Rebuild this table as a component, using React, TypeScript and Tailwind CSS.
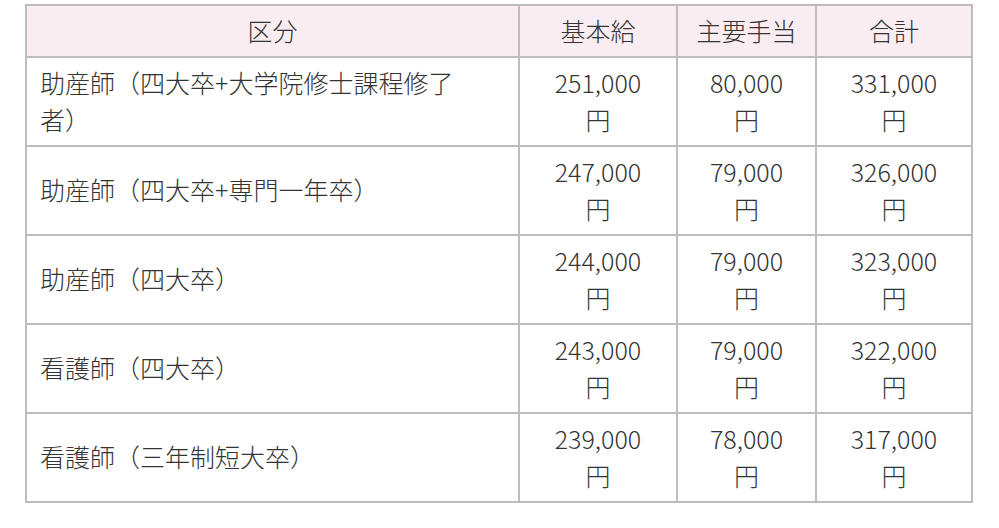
import React from 'react';

type Row = {
  label: React.ReactNode;
  base: string;
  allowance: string;
  total: string;
};

const rows: Row[] = [
  {
    label: (
      <>
        助産師（四大卒+大学院修士課程修了
        <br />
        者）
      </>
    ),
    base: '251,000',
    allowance: '80,000',
    total: '331,000',
  },
  { label: '助産師（四大卒+専門一年卒）', base: '247,000', allowance: '79,000', total: '326,000' },
  { label: '助産師（四大卒）', base: '244,000', allowance: '79,000', total: '323,000' },
  { label: '看護師（四大卒）', base: '243,000', allowance: '79,000', total: '322,000' },
  { label: '看護師（三年制短大卒）', base: '239,000', allowance: '78,000', total: '317,000' },
];

const Yen: React.FC<{ value: string }> = ({ value }) => (
  <td className="border-2 border-[#bdbdbd] px-[13px] py-[6px] text-center align-middle">
    {value}
    <br />円
  </td>
);

const App: React.FC = () => {
  return (
    <div
      className="min-h-screen bg-white pt-[4px] pl-[25px] text-[25px] leading-[37.5px] font-light text-[#333333]"
      style={{ fontFamily: '"Noto Sans CJK JP", "Noto Sans", sans-serif' }}
    >
      <table className="table-fixed border-collapse w-[948px]">
        <colgroup>
          <col className="w-[493px]" />
          <col className="w-[158px]" />
          <col className="w-[139px]" />
          <col className="w-[156px]" />
        </colgroup>
        <thead>
          <tr className="bg-[#f9edf1]">
            <th className="border-2 border-[#bdbdbd] px-[13px] py-[6px] font-light text-center">区分</th>
            <th className="border-2 border-[#bdbdbd] px-[13px] py-[6px] font-light text-center">基本給</th>
            <th className="border-2 border-[#bdbdbd] px-[8px] py-[6px] font-light text-center">主要手当</th>
            <th className="border-2 border-[#bdbdbd] px-[13px] py-[6px] font-light text-center">合計</th>
          </tr>
        </thead>
        <tbody>
          {rows.map((row, i) => (
            <tr key={i}>
              <td className="border-2 border-[#bdbdbd] px-[13px] py-[6px] text-left align-middle">
                {row.label}
              </td>
              <Yen value={row.base} />
              <Yen value={row.allowance} />
              <Yen value={row.total} />
            </tr>
          ))}
        </tbody>
      </table>
    </div>
  );
};

export default App;
